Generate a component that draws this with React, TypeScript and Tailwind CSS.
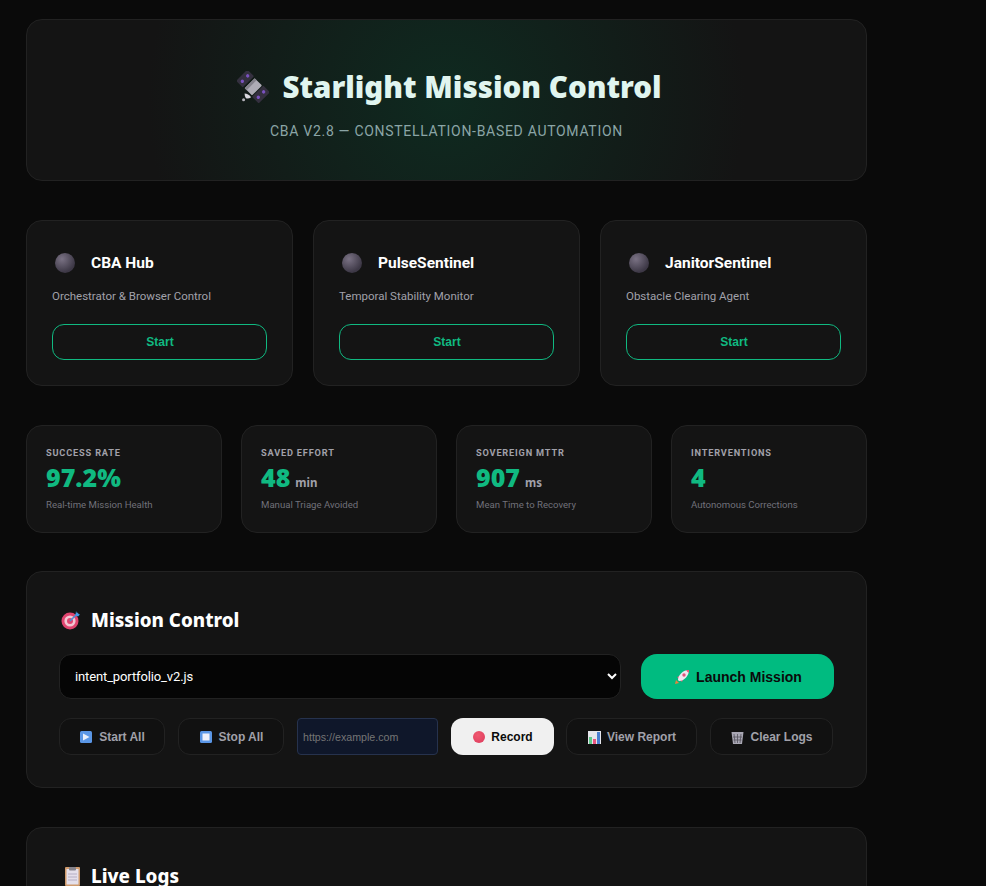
import React from 'react';

const sans = "font-['Noto_Sans','Open_Sans',sans-serif]";
const body = "font-['Roboto','Noto_Sans',sans-serif]";
const arial = "font-['Liberation_Sans',Arial,sans-serif]";

function Satellite() {
  return (
    <svg width="32" height="32" viewBox="0 0 34 34" className="shrink-0">
      <g transform="rotate(45 17 16.5)">
        <rect x="0" y="8" width="10" height="17" rx="1" fill="#34303f" />
        <circle cx="5" cy="12.5" r="1.8" fill="#7a52c0" />
        <circle cx="5" cy="20.5" r="1.8" fill="#7a52c0" />
        <rect x="24" y="8" width="10" height="17" rx="1" fill="#34303f" />
        <circle cx="29" cy="12.5" r="1.8" fill="#7a52c0" />
        <circle cx="29" cy="20.5" r="1.8" fill="#7a52c0" />
        <rect x="12" y="9" width="11" height="15" rx="1" fill="#aeacb6" />
        <rect x="12" y="9" width="3" height="15" fill="#85838d" />
      </g>
      <path d="M8 24 q4 0 7 4 q-3 2 -5.5 1 q-1.5 -2 -1.5 -5z" fill="#d9d7de" />
      <circle cx="7" cy="30.5" r="1.6" fill="#b5b3bb" />
    </svg>
  );
}

function Target() {
  return (
    <svg width="20" height="20" viewBox="0 0 20 20" className="shrink-0">
      <circle cx="9" cy="11" r="8.5" fill="#e0446f" />
      <circle cx="9" cy="11" r="5.6" fill="#f2c6d2" />
      <circle cx="9" cy="11" r="3" fill="#e0446f" />
      <path d="M9 11 L17 3" stroke="#4a8fd8" strokeWidth="1.6" />
      <path d="M15 1 l1 2.5 L19 4.5 l-2 2 -2.5 -1z" fill="#3f9be8" />
    </svg>
  );
}

function Rocket() {
  return (
    <svg width="16" height="16" viewBox="0 0 16 16" className="shrink-0">
      <path d="M1 15 l1-4 3 3z" fill="#e8823c" />
      <path d="M3 8 l3-1 3 3-1 3z" fill="#e94b6d" />
      <path d="M4 11 C4 6 9 1 15 1 C15 7 10 12 5 12z" fill="#efe6f0" />
      <circle cx="10" cy="6" r="1.7" fill="#e0557d" />
      <path d="M12 1.3 L15 1 L14.7 4z" fill="#e94b6d" />
    </svg>
  );
}

function BoxIcon({ kind }: { kind: 'play' | 'stop' }) {
  return (
    <svg width="12" height="12" viewBox="0 0 12 12" className="shrink-0 mr-px">
      <rect width="12" height="12" rx="1.5" fill="#5a96e6" />
      {kind === 'play' ? <path d="M3 2.5 L9.5 6 L3 9.5z" fill="#e8eefa" /> : <rect x="2.5" y="2.5" width="7" height="7" fill="#eef0fa" />}
    </svg>
  );
}

function ChartIcon() {
  return (
    <svg width="13" height="13" viewBox="0 0 13 13" className="shrink-0">
      <rect width="13" height="13" fill="#e6e6ec" />
      <rect x="1" y="6" width="3" height="7" fill="#5fc88a" />
      <rect x="5" y="8" width="3" height="5" fill="#e8557f" />
      <rect x="9" y="1" width="3" height="12" fill="#4a7fd0" />
    </svg>
  );
}

function BasketIcon() {
  return (
    <svg width="13" height="13" viewBox="0 0 13 13" className="shrink-0">
      <path d="M0.5 1 H12.5 L11 13 H2z" fill="#a9a7b3" />
      <path d="M3 3 L4 12 M6.5 3 V12 M10 3 L9 12 M2 6 H11 M2.5 9 H10.5" stroke="#55535d" strokeWidth="0.8" />
    </svg>
  );
}

function ClipboardIcon() {
  return (
    <svg width="15" height="19" viewBox="0 0 15 19" className="shrink-0">
      <rect width="15" height="19" rx="1" fill="#cf9a6c" />
      <rect x="1.5" y="2" width="12" height="15.5" fill="#e4dfea" />
      <rect x="4" y="0" width="7" height="3.5" rx="1" fill="#85838c" />
      <path d="M3 7 H12 M3 10 H12 M3 13 H12" stroke="#b5aec4" strokeWidth="1" />
    </svg>
  );
}

function ServiceCard({ name, desc }: { name: string; desc: string }) {
  return (
    <div className="flex-1 h-[166px] px-[25px] pt-[31px] rounded-2xl border border-[#222222] bg-[#141414]">
      <div className="flex items-center h-[22px]">
        <span className="w-5 h-5 ml-[3px] mr-[16px] rounded-full bg-[radial-gradient(circle_at_35%_30%,#7a7284,#3d3846_70%)]" />
        <span className={`${body} pt-[2px] text-[15.5px] font-bold text-white`}>{name}</span>
      </div>
      <p className={`${body} mt-[13px] text-[11.5px] leading-[18px] text-[#a1a1aa]`}>{desc}</p>
      <button className={`${arial} mt-[19px] pl-[1px] w-full h-9 rounded-xl border border-[#10b981] text-xs font-bold text-[#10b981]`}>Start</button>
    </div>
  );
}

function Stat({ label, value, unit, note }: { label: string; value: string; unit?: string; note: string }) {
  return (
    <div className="flex-1 h-[108px] pl-[19px] pt-[20px] rounded-2xl border border-[#222222] bg-[#141414]">
      <div className={`${body} text-[9.2px] leading-[13px] font-bold tracking-[0.09em] text-[#a1a1aa]`}>{label}</div>
      <div className="flex items-baseline h-[36px]">
        <span className={`${sans} text-[25px] leading-[36px] font-black text-[#10b981]`}>{value}</span>
        {unit && <span className={`${sans} ml-[5px] text-[11.5px] font-bold text-[#a1a1aa]`}>{unit}</span>}
      </div>
      <div className={`${body} mt-[3px] text-[9.6px] leading-[14px] text-[#71717a]`}>{note}</div>
    </div>
  );
}

function ToolButton({ icon, label, width }: { icon: React.ReactNode; label: string; width: string }) {
  return (
    <button className={`${arial} ${width} h-[37px] pl-[1px] pt-[1px] flex items-center justify-center gap-[6px] rounded-xl border border-[#222222] bg-[#111111] text-xs font-bold text-[#a1a1aa]`}>
      {icon}
      {label}
    </button>
  );
}

export default function App() {
  return (
    <main className="h-[886px] overflow-hidden bg-[#0a0a0a] pt-[19px] pl-[26px]">
      <div className="w-[841px] flex flex-col gap-[39px]">
        {/* header */}
        <header className="h-[162px] flex flex-col items-center pt-[46px] rounded-2xl border border-[#222222] bg-[radial-gradient(circle_at_center,#0f2a20_0%,#141414_70%)]">
          <div className="flex items-center gap-[13px] h-[42px] pl-[6px]">
            <Satellite />
            <h1 className={`${sans} text-[29.5px] font-black text-[#e0f5ef]`}>Starlight Mission Control</h1>
          </div>
          <p className={`${body} mt-[13px] text-sm tracking-[0.05em] text-[#8ba5a6]`}>CBA V2.8 — CONSTELLATION-BASED AUTOMATION</p>
        </header>

        {/* services */}
        <section className="flex gap-[20px]">
          <ServiceCard name="CBA Hub" desc="Orchestrator & Browser Control" />
          <ServiceCard name="PulseSentinel" desc="Temporal Stability Monitor" />
          <ServiceCard name="JanitorSentinel" desc="Obstacle Clearing Agent" />
        </section>

        {/* stats */}
        <section className="flex gap-[19px]">
          <Stat label="SUCCESS RATE" value="97.2%" note="Real-time Mission Health" />
          <Stat label="SAVED EFFORT" value="48" unit="min" note="Manual Triage Avoided" />
          <Stat label="SOVEREIGN MTTR" value="907" unit="ms" note="Mean Time to Recovery" />
          <Stat label="INTERVENTIONS" value="4" note="Autonomous Corrections" />
        </section>

        {/* mission control */}
        <section className="-mt-px h-[217px] px-[32px] pt-[35px] rounded-2xl border border-[#222222] bg-[#141414]">
          <div className="flex items-center gap-[10px] h-[26px]">
            <span className="ml-[2px]"><Target /></span>
            <h2 className={`${sans} text-[18.8px] font-extrabold text-white`}>Mission Control</h2>
          </div>
          <div className="flex gap-[20px] mt-[21px]">
            <select className={`${body} w-[562px] h-[45px] pl-[11px] pr-[4px] rounded-xl border border-[#222222] bg-[#050505] text-[13px] tracking-[-0.01em] text-white`}>
              <option>intent_portfolio_v2.js</option>
            </select>
            <button className={`${arial} w-[193px] h-[45px] pl-[1px] flex items-center justify-center gap-[6px] rounded-2xl bg-[#00bb80] text-sm font-bold text-[#0a0a0a]`}>
              <Rocket />
              Launch Mission
            </button>
          </div>
          <div className="flex items-center mt-[19px]">
            <ToolButton width="w-[106px]" icon={<BoxIcon kind="play" />} label="Start All" />
            <span className="ml-[13px]"><ToolButton width="w-[106px]" icon={<BoxIcon kind="stop" />} label="Stop All" /></span>
            <input placeholder="https://example.com" className={`${arial} ml-[13px] w-[141px] h-[37px] px-[5px] rounded-sm border border-[#26324d] bg-[#0f172a] text-[10.67px] text-white placeholder:text-[#757575] outline-none`} />
            <button className={`${arial} ml-[13px] w-[103px] h-[37px] pl-[1px] pt-[1px] flex items-center justify-center gap-[6px] rounded-xl bg-[#f0f0f0] text-xs font-bold text-[#0a0a0a]`}>
              <span className="w-3 h-3 rounded-full bg-[radial-gradient(circle_at_40%_35%,#f0586f,#dc3a5c)]" />
              Record
            </button>
            <span className="ml-[12px]"><ToolButton width="w-[131px]" icon={<ChartIcon />} label="View Report" /></span>
            <span className="ml-[13px]"><ToolButton width="w-[123px]" icon={<BasketIcon />} label="Clear Logs" /></span>
          </div>
        </section>

        {/* logs */}
        <section className="h-[200px] pl-[38px] pt-[35px] rounded-2xl border border-[#222222] bg-[#141414]">
          <div className="flex items-center gap-[11px] h-[26px]">
            <ClipboardIcon />
            <h2 className={`${sans} text-[18.8px] font-extrabold text-white`}>Live Logs</h2>
          </div>
        </section>
      </div>
    </main>
  );
}
